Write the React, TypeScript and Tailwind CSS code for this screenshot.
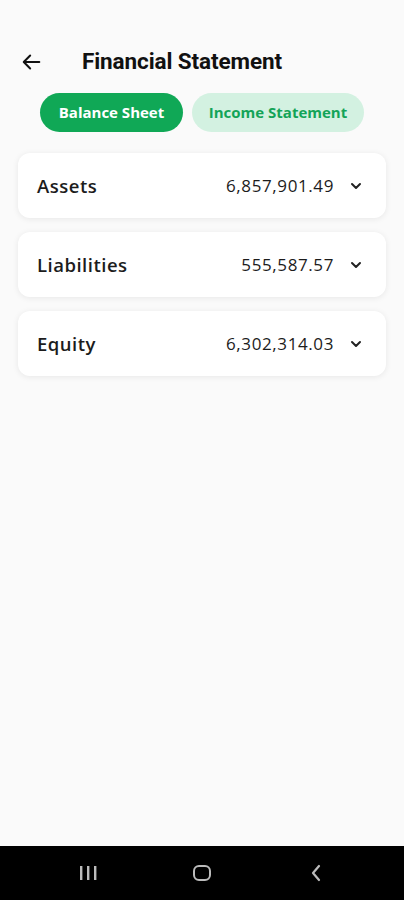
import { ChevronDown } from "lucide-react";

const rows = [
  { label: "Assets", value: "6,857,901.49" },
  { label: "Liabilities", value: "555,587.57" },
  { label: "Equity", value: "6,302,314.03" },
];

export default function App() {
  return (
    <div className="h-[900px] w-[404px] bg-[#fafafa] flex flex-col font-['Open_Sans',sans-serif] text-[#1a1a1a]">
      <div className="flex-1 flex flex-col">
        <div className="flex items-center pt-[48px] h-[76px]">
          <button className="ml-[20px] w-[24px] h-[24px] flex items-center justify-center">
            <svg width="22" height="22" viewBox="0 0 24 24" fill="none" stroke="#111" strokeWidth="2.2" strokeLinecap="round" strokeLinejoin="round">
              <path d="M20 12H4" />
              <path d="M10 5l-7 7 7 7" />
            </svg>
          </button>
          <h1 className="ml-[38px] text-[22.5px] font-bold font-['Roboto',sans-serif] tracking-[-0.1px] text-[#111]">
            Financial Statement
          </h1>
        </div>

        <div className="flex gap-[9px] pl-[40px] mt-[17px]">
          <button className="h-[39px] w-[143px] rounded-full bg-[#10a856] text-white text-[15px] font-bold">
            Balance Sheet
          </button>
          <button className="h-[39px] w-[172px] rounded-full bg-[#d3f1e1] text-[#13a458] text-[15px] font-bold">
            Income Statement
          </button>
        </div>

        <div className="flex flex-col gap-[14px] mx-[18px] mt-[21px]">
          {rows.map((r) => (
            <div
              key={r.label}
              className="h-[65px] bg-white rounded-[12px] shadow-[0_1px_6px_rgba(0,0,0,0.08)] flex items-center pl-[19px] pr-[22px]"
            >
              <span className="text-[18.5px] font-semibold tracking-[0.5px] text-[#1c1c1c]">{r.label}</span>
              <span className="ml-auto text-[17px] font-medium tracking-[0.6px] text-[#1c1c1c]">{r.value}</span>
              <ChevronDown className="ml-[14px] w-[16px] h-[16px] text-[#222]" strokeWidth={3} />
            </div>
          ))}
        </div>
      </div>

      <div className="h-[54px] bg-black flex items-center justify-center gap-[95px]">
        <svg width="20" height="18" viewBox="0 0 20 18" fill="#bbb">
          <rect x="2" y="2" width="2.4" height="14" />
          <rect x="9" y="2" width="2.4" height="14" />
          <rect x="16" y="2" width="2.4" height="14" />
        </svg>
        <div className="w-[18px] h-[16px] rounded-[6px] border-2 border-[#bbb]" />
        <svg width="20" height="20" viewBox="0 0 20 20" fill="none" stroke="#bbb" strokeWidth="2.2" strokeLinecap="round" strokeLinejoin="round">
          <path d="M13 3l-6 7 6 7" />
        </svg>
      </div>
    </div>
  );
}
